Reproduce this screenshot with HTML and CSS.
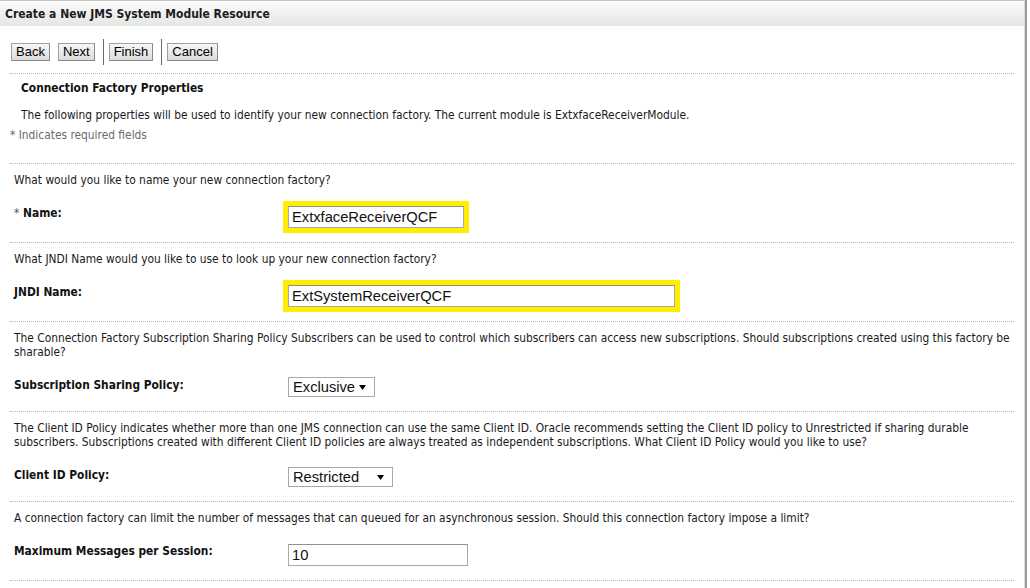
FILE: index.html
```html
<!DOCTYPE html>
<html>
<head>
<meta charset="utf-8">
<title>Create a New JMS System Module Resource</title>
<link rel="stylesheet" href="styles.css">
</head>
<body>
<div class="page">
  <div class="titlebar">Create a New JMS System Module Resource</div>
  <div class="toolbar">
    <button class="btn">Back</button>
    <button class="btn">Next</button>
    <span class="sep"></span>
    <button class="btn">Finish</button>
    <span class="sep"></span>
    <button class="btn">Cancel</button>
  </div>
  <div class="content">
    <div class="intro">
      <div class="intro-title">Connection Factory Properties</div>
      <div class="intro-desc">The following properties will be used to identify your new connection factory. The current module is ExtxfaceReceiverModule.</div>
      <div class="required">* Indicates required fields</div>
    </div>

    <div class="section">
      <div class="question">What would you like to name your new connection factory?</div>
      <div class="field-row">
        <div class="label"><span class="star">*</span> Name:</div>
        <div class="input highlight w-name">ExtxfaceReceiverQCF</div>
      </div>
    </div>

    <div class="section">
      <div class="question">What JNDI Name would you like to use to look up your new connection factory?</div>
      <div class="field-row">
        <div class="label">JNDI Name:</div>
        <div class="input highlight w-jndi">ExtSystemReceiverQCF</div>
      </div>
    </div>

    <div class="section">
      <div class="question">The Connection Factory Subscription Sharing Policy Subscribers can be used to control which subscribers can access new subscriptions. Should subscriptions created using this factory be sharable?</div>
      <div class="field-row">
        <div class="label">Subscription Sharing Policy:</div>
        <div class="select w-excl"><span class="select-text">Exclusive</span><svg class="caret" width="7" height="5" viewBox="0 0 7 5"><path d="M0 0H7L3.5 5Z" fill="#000"/></svg></div>
      </div>
    </div>

    <div class="section">
      <div class="question">The Client ID Policy indicates whether more than one JMS connection can use the same Client ID. Oracle recommends setting the Client ID policy to Unrestricted if sharing durable subscribers. Subscriptions created with different Client ID policies are always treated as independent subscriptions. What Client ID Policy would you like to use?</div>
      <div class="field-row">
        <div class="label">Client ID Policy:</div>
        <div class="select w-restr"><span class="select-text">Restricted</span><svg class="caret" width="7" height="5" viewBox="0 0 7 5"><path d="M0 0H7L3.5 5Z" fill="#000"/></svg></div>
      </div>
    </div>

    <div class="section">
      <div class="question">A connection factory can limit the number of messages that can queued for an asynchronous session. Should this connection factory impose a limit?</div>
      <div class="field-row">
        <div class="label">Maximum Messages per Session:</div>
        <div class="input w-max">10</div>
      </div>
    </div>
  </div>
</div>
</body>
</html>
```

FILE: styles.css
```css
html, body {
  margin: 0;
  padding: 0;
  background: #fff;
}
body {
  font-family: "DejaVu Sans Condensed", "DejaVu Sans", sans-serif;
  font-size: 11.85px;
  color: #1a1a1a;
}
.page {
  width: 1025px;
  height: 588px;
  box-sizing: border-box;
  border-top: 1px solid #c4c4c4;
  border-right: 1px solid #dcdcdc;
  box-shadow: 2px 0 0 #9a9a9a;
}
.titlebar {
  margin-top: 1px;
  height: 24px;
  line-height: 24px;
  padding-left: 5px;
  font-size: 12px;
  font-weight: bold;
  color: #1c1c1c;
  background: linear-gradient(#f8f9f8, #e5e7e5);
}
.toolbar {
  display: flex;
  align-items: center;
  padding: 13px 0 0 11px;
  height: 26px;
}
.btn {
  font-family: "Liberation Sans", Arial, sans-serif;
  font-size: 13px;
  height: 18px;
  line-height: 14px;
  padding: 0 4px;
  margin: 0 8px 0 0;
  color: #000;
  background: linear-gradient(#f7f7f7, #dcdcdc);
  border: 1px solid #a0a0a0;
  border-right-color: #888;
  border-bottom-color: #888;
  border-radius: 0;
}
.sep {
  width: 1px;
  height: 26px;
  background: #6a6a6a;
  margin: 0 5px 0 0;
}
.content {
  padding: 8px 10px 0 10px;
}
.intro {
  border-top: 1px dotted #b5b5b5;
  border-bottom: 1px dotted #b5b5b5;
  padding: 7px 0 21px 0;
  line-height: 14px;
}
.intro-title {
  font-weight: bold;
  padding-left: 11px;
  color: #111;
}
.intro-desc {
  padding-left: 11px;
  margin-top: 13px;
}
.required {
  margin-top: 6px;
  color: #6b6b6b;
}
.section {
  border-bottom: 1px dotted #b5b5b5;
  padding: 9px 0 14px 4px;
  line-height: 14px;
}
.field-row {
  display: flex;
  align-items: flex-start;
  margin-top: 18px;
}
.label {
  width: 274px;
  padding-top: 1px;
  font-weight: bold;
  color: #111;
}
.star {
  font-weight: normal;
  color: #555;
}
.input {
  box-sizing: border-box;
  height: 22px;
  margin-top: 1px;
  border: 1px solid #a9a9a9;
  border-top-color: #8f8f8f;
  padding-left: 3px;
  font-family: "Liberation Sans", Arial, sans-serif;
  font-size: 14.7px;
  line-height: 20px;
  color: #111;
  background: #fff;
}
.highlight {
  outline: 5px solid #ffee00;
}
.w-name { width: 176px; }
.w-jndi { width: 387px; }
.w-max { width: 180px; }
.select {
  box-sizing: border-box;
  height: 20px;
  display: flex;
  align-items: center;
  justify-content: space-between;
  border: 1px solid #a9a9a9;
  padding: 0 8px 0 4px;
  font-family: "Liberation Sans", Arial, sans-serif;
  font-size: 14.7px;
  color: #111;
  background: #fff;
}
.select-text {
  line-height: 18px;
}
.caret {
  display: block;
}
.w-excl { width: 87px; }
.w-restr { width: 105px; }
```
